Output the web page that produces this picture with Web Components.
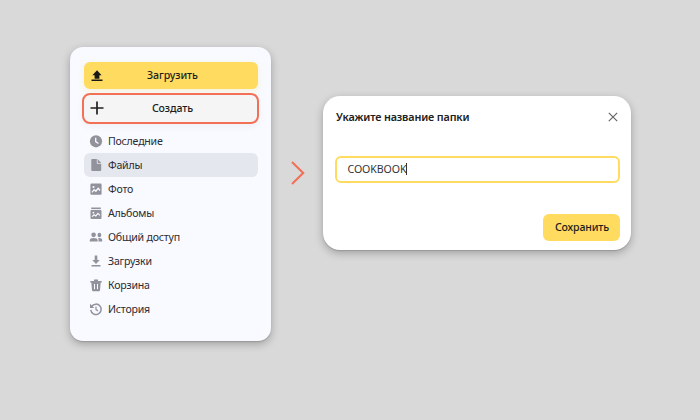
<!DOCTYPE html>
<html lang="ru">
<head>
<meta charset="utf-8">
<title>Создание папки</title>
<style>
html,body{margin:0}
body{width:700px;height:420px;overflow:hidden;background:#d9d9d9;font-family:"Noto Sans","Open Sans",sans-serif;font-size:10.6px;color:#2b2b33}
</style>
</head>
<body>
<folder-guide>
  <disk-sidebar>
    <action-button slot="actions" kind="upload" icon="upload">Загрузить</action-button>
    <action-button slot="actions" kind="create" icon="plus">Создать</action-button>
    <nav-item icon="clock">Последние</nav-item>
    <nav-item icon="file" selected>Файлы</nav-item>
    <nav-item icon="photo">Фото</nav-item>
    <nav-item icon="album">Альбомы</nav-item>
    <nav-item icon="people">Общий доступ</nav-item>
    <nav-item icon="download">Загрузки</nav-item>
    <nav-item icon="trash">Корзина</nav-item>
    <nav-item icon="history">История</nav-item>
  </disk-sidebar>
  <step-arrow></step-arrow>
  <folder-dialog>
    <span slot="title">Укажите название папки</span>
    <name-field>COOKBOOK</name-field>
    <action-button slot="footer" kind="save">Сохранить</action-button>
  </folder-dialog>
</folder-guide>
<script>
const icons = {
  upload: '<svg width="12" height="12" viewBox="0 0 12 12"><path d="M6 .2 10.600 5.300H8.400V8.700H3.600V5.300H1.400Z" fill="#181818"/><path d="M.5 9.500h11v1.500H.5z" fill="#181818"/></svg>',
  plus: '<svg width="14" height="14" viewBox="0 0 14 14"><path d="M7 .5v13M.5 7h13" stroke="#202020" stroke-width="1.7"/></svg>',
  clock: '<circle cx="6" cy="6.300" r="6.100"/><path d="M5.700 2.800v3.800l2.700 1.900" fill="none" stroke="#f8faff" stroke-width="1.300"/>',
  file: '<path d="M2.3 0H6.800v4.800h4.400V11q0 1-1 1H2.300q-1 0-1-1V1q0-1 1-1Z"/><path d="M7.700 0 11.200 3.900H7.700Z"/>',
  photo: '<path d="M1.500.6h9q1.100 0 1.100 1.100v9q0 1.100-1.100 1.100h-9Q.4 11.800.4 10.700v-9Q.4.6 1.500.6Z"/><circle cx="3.500" cy="4" r="1.100" fill="#f8faff"/><path d="M2 9.300 4.200 6.700l1.700 1.500L8.200 5.300 10 7.500" fill="none" stroke="#f8faff" stroke-width="1.300"/>',
  album: '<path d="M1.200.5h9.600v1.600H1.200z"/><path d="M1.500 3.100h9q1 0 1 1V11q0 1-1 1h-9q-1 0-1-1V4.100q0-1 1-1Z"/><circle cx="3.400" cy="5.700" r=".9" fill="#f8faff"/><path d="M2 9.600 4.100 7.700l1.700 1.300L8 6.400l2 2" fill="none" stroke="#f8faff" stroke-width="1.200"/>',
  people: '<ellipse cx="3.600" cy="3.800" rx="2.300" ry="2.400"/><path d="M-.2 10.500V9.200Q-.2 7 3.700 7t3.900 2.200v1.300Z"/><ellipse cx="9.400" cy="4" rx="1.900" ry="2.200"/><path d="M8.200 7.100q4-.3 4 2.100v1.300H8.500V9.200q0-1.300-.3-2.100Z"/>',
  download: '<path d="M4.700.6h2.600v4.300h2.500L6 9.100 2.200 4.900h2.500ZM1.500 9.900h9v1.500h-9z"/>',
  trash: '<path d="M4 2V.5h4V2h3.700v1.500H.3V2ZM1.300 3.400h9.400l-.7 7.900q-.1.900-1 .9H3q-.9 0-1-.9Z"/><path d="M4.500 5v5.200M7.500 5v5.200" stroke="#f8faff"/>',
  history: '<path d="M1.600 3.500a5.200 5.200 0 1 1-.8 3.400" fill="none" stroke="#92929c" stroke-width="1.500"/><path d="M0 .8V5h4.300Z"/><path d="M6 3.600v3l2 1.500" fill="none" stroke="#92929c" stroke-width="1.200"/>'
};
function define(name, html) {
  customElements.define(name, class extends HTMLElement {
    connectedCallback() {
      if (this.shadowRoot) return;
      const t = document.createElement('template');
      t.innerHTML = typeof html === 'function' ? html(this) : html;
      this.attachShadow({mode:'open'}).append(t.content.cloneNode(true));
    }
  });
}
define('folder-guide', `<style>:host{display:grid;grid-template-columns:201.400px 51.600px 308px;align-items:start;padding:47px 0 0 70px}</style><slot></slot>`);
define('disk-sidebar', `<style>
:host{display:block;box-sizing:border-box;height:294.400px;padding:15px 12px 0;border-radius:13px;background:#f8faff;box-shadow:0 3px 9px #0004,0 1px 1px #0002}
.actions{display:grid;gap:4px;justify-items:center}
nav{display:grid;grid-auto-rows:24px;padding:4.500px 1.400px 0 2px}
</style><div class="actions"><slot name="actions"></slot></div><nav><slot></slot></nav>`);
define('action-button', el => `<style>
:host{display:flex;box-sizing:border-box;align-items:center;justify-content:center;width:174px;height:27px;border-radius:6px;background:#ffdb60;color:#1d1d1d;font-weight:500;font-size:10.600px;letter-spacing:-.1px}
:host([kind=upload]){box-shadow:0 2px 6px #ffdb6045;padding:0 25px 0 7.500px}
:host([kind=create]){width:177.400px;height:31px;border:2px solid #f27055;border-radius:8px;background:#f5f5f5;padding:0 27px 0 6px;box-shadow:0 3px 7px #0000000a}
:host([kind=save]){width:77px;letter-spacing:-.15px}
.label{flex:1;text-align:center;white-space:nowrap;padding-bottom:1px}
svg{display:block;flex:none}
:host([kind=upload]) .label{padding-left:9px}
:host([kind=create]) .label{padding-left:10.500px}
:host([kind=save]) .label{padding-bottom:0}
:host([kind=create]) svg{margin-bottom:1px}
</style>${icons[el.getAttribute('icon')] || ''}<span class="label"><slot></slot></span>`);
define('nav-item', el => `<style>
:host{display:flex;align-items:center;gap:6px;padding-left:6px;border-radius:6px;white-space:nowrap;letter-spacing:-.22px}
:host([selected]){background:#e4e7ee}
svg{flex:none;fill:#92929c;overflow:visible}
</style><svg width="12" height="12" viewBox="0 0 12 12">${icons[el.getAttribute('icon')]}</svg><span><slot></slot></span>`);
define('step-arrow', `<style>:host{display:block;padding:114px 0 0 20px}svg{display:block}</style><svg width="14" height="24" viewBox="0 0 14 24"><path d="m1 1 11.200 11L1 23" fill="none" stroke="#f27055" stroke-width="2.100"/></svg>`);
define('folder-dialog', `<style>
:host{display:flex;flex-direction:column;box-sizing:border-box;height:153.500px;margin-top:49px;padding:13px 10.500px 9px 12.500px;border-radius:17px;background:#fff;box-shadow:0 3px 9px #0004,0 1px 1px #0002}
header{display:flex;justify-content:space-between;align-items:center;height:15px;padding:0 2.500px 0 .5px;font-weight:600;font-size:10.800px;letter-spacing:-.14px;color:#202020;margin-bottom:32px}
footer{display:flex;justify-content:flex-end;margin-top:auto}
</style><header><slot name="title"></slot><svg width="10" height="10" viewBox="0 0 10 10"><path d="m.8.8 8.400 8.400m0-8.400L.8 9.200" stroke="#666" stroke-width="1.200"/></svg></header><slot></slot><footer><slot name="footer"></slot></footer>`);
define('name-field', `<style>
:host{display:flex;align-items:center;box-sizing:border-box;height:27px;padding:0 0 1px 10px;border:2px solid #ffdb60;border-radius:6px;background:#fff;color:#333;font-size:10.600px;letter-spacing:-.08px}
i{width:1px;height:12px;background:#333}
</style><slot></slot><i></i>`);
</script>
</body>
</html>
